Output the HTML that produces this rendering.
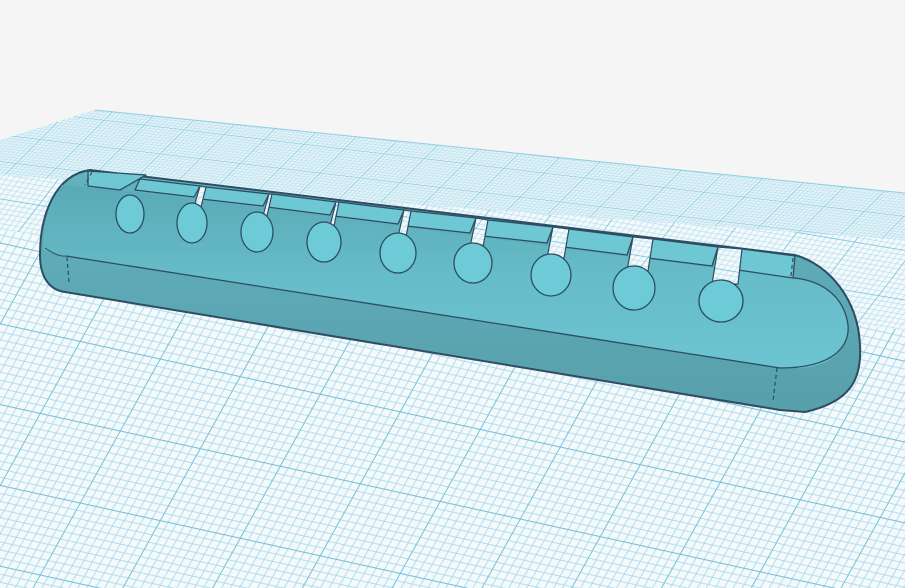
<!DOCTYPE html>
<html><head><meta charset="utf-8"><style>
html,body{margin:0;padding:0;background:#f5f5f5;}
svg{display:block}
</style></head><body>
<svg width="905" height="588" viewBox="0 0 905 588" xmlns="http://www.w3.org/2000/svg">
<defs>
<pattern id="mA" width="8" height="8" patternUnits="userSpaceOnUse"><rect width="8" height="8" fill="#f4f9fb"/><path d="M0 0.4H8M0.4 0V8" stroke="#a5d8ea" stroke-width="0.9"/></pattern>
<pattern id="mB" width="8" height="8" patternUnits="userSpaceOnUse"><rect width="8" height="8" fill="#e4f3f8"/><path d="M0 0.4H8M0.4 0V8" stroke="#9bd3e7" stroke-width="1"/></pattern>
<pattern id="pC" width="80" height="80" patternUnits="userSpaceOnUse" patternTransform="matrix(1 0.22 -0.5 0.9 0 0)">
<rect width="80" height="80" fill="url(#mA)"/><path d="M0 0.5H80M0.5 0V80" stroke="#72c2de" stroke-width="1.1"/></pattern>
<pattern id="pB" width="80" height="80" patternUnits="userSpaceOnUse" patternTransform="matrix(0.72 0.12 -0.42 0.55 0 0)">
<rect width="80" height="80" fill="url(#mA)"/><path d="M0 0.5H80M0.5 0V80" stroke="#72c2de" stroke-width="1.4"/></pattern>
<pattern id="pA" width="80" height="80" patternUnits="userSpaceOnUse" patternTransform="matrix(0.5 0.06 -0.3 0.3 0 0)">
<rect width="80" height="80" fill="url(#mB)"/><path d="M0 0.5H80M0.5 0V80" stroke="#6fc0dc" stroke-width="1.8"/></pattern>
<linearGradient id="front" x1="0" y1="0" x2="0" y2="1">
<stop offset="0" stop-color="#5aa9b6"/><stop offset="0.5" stop-color="#66bcc8"/><stop offset="1" stop-color="#6cc5d1"/>
</linearGradient>
<linearGradient id="side" x1="0" y1="0" x2="0" y2="1">
<stop offset="0" stop-color="#62b2be"/><stop offset="1" stop-color="#579fab"/>
</linearGradient>
<clipPath id="plane"><polygon points="95,110 905,193 905,588 0,588 0,140"/></clipPath>
</defs>
<rect width="905" height="588" fill="#f5f5f5"/>
<g clip-path="url(#plane)">
<rect width="905" height="588" fill="url(#pC)"/>
<polygon points="0,0 905,0 905,330 0,230" fill="url(#pB)"/>
<polygon points="0,0 905,0 905,240 0,175" fill="url(#pA)"/>
</g>
<path d="M95,110 L905,193" stroke="#8fcde3" stroke-width="1"/>

<path d="M90,170 L795,255 C830,265 858,300 860,345 C862,380 850,402 805,412 L780,410 L65,292 C50,290 40,278 40,255 C40,215 55,175 90,170 Z" fill="url(#side)" stroke="#2e4d63" stroke-width="2"/>
<path d="M62,185 C50,205 42,230 44,250 L66,256 L780,368 L800,368 C835,366 850,345 848,325 C844,295 820,280 793,278 L120,190 Z" fill="url(#front)"/>
<path d="M66,256 L780,368 C835,368 850,345 848,325 C844,295 820,280 793,278" fill="none" stroke="#2e4d63" stroke-width="1.3"/>
<path d="M45,248 C60,258 64,256 66,256" fill="none" stroke="#2e4d63" stroke-width="1"/>
<g fill="#6ec8d3" stroke="#2e4d63" stroke-width="1.3" stroke-linejoin="round">
<path d="M88,171 L146,175 L120,190 L88,186 Z"/>
<path d="M140,179 L200,186 L194,197 L135,190 Z"/>
<path d="M206,187 L269,194 L263,206 L201,199 Z"/>
<path d="M272,194 L336,202 L330,215 L267,207 Z"/>
<path d="M339,202 L404,210 L398,224 L334,216 Z"/>
<path d="M411,211 L476,218 L470,233 L406,226 Z"/>
<path d="M488,220 L553,227 L547,243 L483,236 Z"/>
<path d="M569,229 L633,237 L627,255 L564,247 Z"/>
<path d="M653,239 L718,247 L712,266 L648,258 Z"/>
<path d="M742,249 L795,256 L793,278 L738,270 Z"/>
</g>
<g fill="url(#pB)" stroke="#2e4d63" stroke-width="1.2">
<path d="M200,186 L206,187 L201,207 L194,207 Z"/>
<path d="M269,194 L272,194 L267,216 L263,216 Z"/>
<path d="M336,202 L339,202 L334,226 L330,226 Z"/>
<path d="M404,210 L411,211 L406,237 L398,237 Z"/>
<path d="M476,218 L488,220 L483,247 L470,247 Z"/>
<path d="M553,227 L569,229 L564,258 L547,258 Z"/>
<path d="M633,237 L653,239 L648,271 L627,271 Z"/>
<path d="M718,247 L742,249 L738,284 L712,284 Z"/>
</g>
<g fill="#6ccbd6" stroke="#2e4d63" stroke-width="1.3">
<ellipse cx="130" cy="214" rx="14" ry="19"/>
<ellipse cx="192" cy="223" rx="15" ry="20"/>
<ellipse cx="257" cy="232" rx="16" ry="20"/>
<ellipse cx="324" cy="242" rx="17" ry="20"/>
<ellipse cx="398" cy="253" rx="18" ry="20"/>
<ellipse cx="473" cy="263" rx="19" ry="20"/>
<ellipse cx="551" cy="275" rx="20" ry="21"/>
<ellipse cx="634" cy="288" rx="21" ry="22"/>
<ellipse cx="721" cy="301" rx="22" ry="21"/>
</g>
<g stroke="#2e4d63" stroke-width="1.2" fill="none" stroke-dasharray="4,3">
<path d="M67,257 L69,283"/>
<path d="M793,258 L791,276"/>
<path d="M777,368 L773,401"/>
<path d="M92,172 L85,185"/>
</g>
</svg>
</body></html>
